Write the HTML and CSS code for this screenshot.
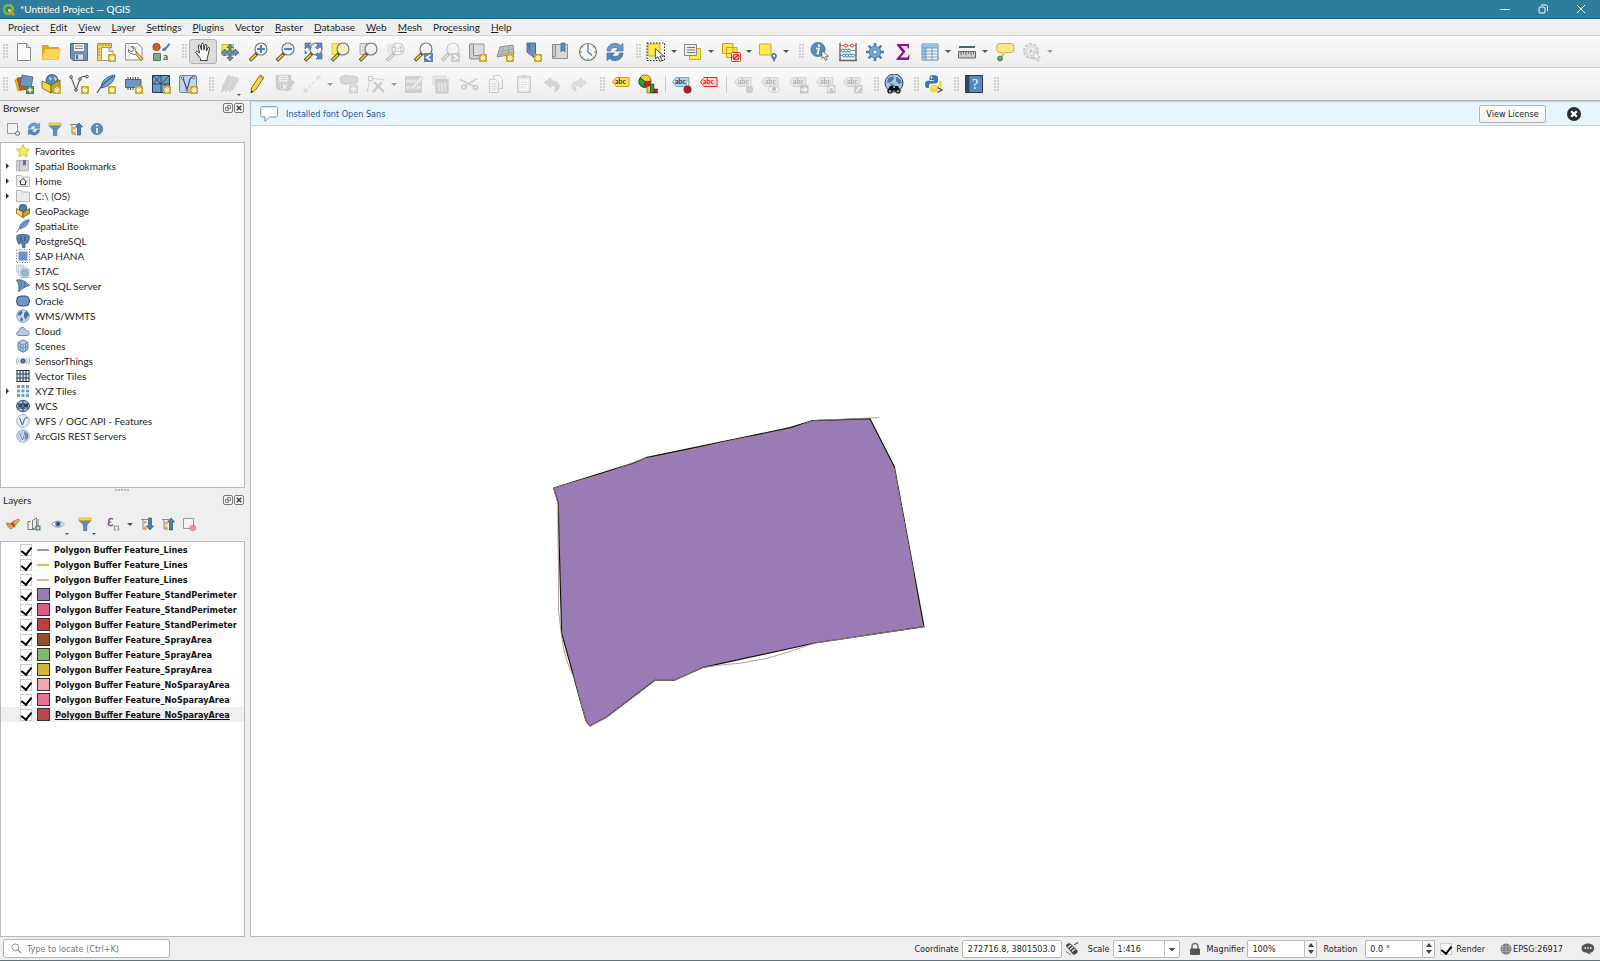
FILE: index.html
```html
<!DOCTYPE html>
<html lang="en">
  <head>
    <meta charset="UTF-8" />
    <meta name="viewport" content="width=device-width, initial-scale=1.0" />
    <title>*Untitled Project — QGIS</title>
    <link rel="stylesheet" href="styles.css">
  </head>
  <body>
    <!-- icon set -->
    <svg class="defs" width="0" height="0">
      <defs>
        <symbol id="badge" viewBox="0 0 8 8"><rect width="8" height="8" rx="1" fill="#cfa820"/><path d="M4 1v6M1 4h6M2 2l4 4M6 2L2 6" stroke="#fff" stroke-width="1"/></symbol>
        <symbol id="mag" viewBox="0 0 20 20"><path d="M9 11.500L2 18.500" stroke="#333" stroke-width="3.400"/><path d="M8 12.500L2.500 18" stroke="#f5c623" stroke-width="2"/><circle cx="13" cy="7" r="6" fill="#f2f2f0" fill-opacity=".85" stroke="#77797a" stroke-width="1.200"/></symbol>
        <symbol id="cursor" viewBox="0 0 10 12"><path d="M1 0.500v9l2.200-2 1.800 4 1.800-.8-1.800-3.800h3.200z" fill="#fff" stroke="#444" stroke-width=".8"/></symbol>
        <symbol id="tag" viewBox="0 0 18 10"><path d="M4 .5h13v9H4L.5 5z"/></symbol>

        <symbol id="new" viewBox="0 0 20 20"><path d="M3.500 1.500h9l4 4v13h-13z" fill="#fff" stroke="#8a8a8a"/><path d="M12.500 1.500v4h4" fill="#ddd" stroke="#8a8a8a"/></symbol>
        <symbol id="open" viewBox="0 0 20 20"><path d="M1 17V3h6l1.500 2H18v12z" fill="#dfa52a"/><path d="M1 17.500L4 7h15.500l-2.500 10.500z" fill="#fcd65c" stroke="#e8b234" stroke-width=".6"/></symbol>
        <symbol id="save" viewBox="0 0 20 20"><path d="M1.500 1.500h17v17H4l-2.500-2.500z" fill="#6a92bd" stroke="#4d6b89"/><path d="M5 2h10v7H5z" fill="#eceeef"/><path d="M6 4h8M6 6.500h8" stroke="#888"/><path d="M5.500 12h9v6h-9z" fill="#d9dde0" stroke="#4d6b89" stroke-width=".6"/><path d="M7 13h2v4H7z" fill="#4d6b89"/></symbol>
        <symbol id="layout" viewBox="0 0 20 20"><path d="M1.500 1.500h14v4h-10v13h-4z" fill="#f5d45c" stroke="#b79224"/><path d="M5.500 5.500h7.500l4 4v9H5.500z" fill="#fff" stroke="#999"/><path d="M13 5.500v4h4" fill="#ddd" stroke="#999"/><path d="M4 2v2M7 2v2M10 2v2M13 2v2M2 7h2M2 10h2M2 13h2" stroke="#8c6d12" stroke-width=".8"/><use href="#badge" x="12" y="12" width="8" height="8"/></symbol>
        <symbol id="manager" viewBox="0 0 20 20"><path d="M1.500 1.500h12l4.500 4v12.500H1.500z" fill="#fafafa" stroke="#8d8d8d"/><path d="M1.500 5h12M5 2v16" stroke="#ccc" stroke-width=".7"/><path d="M11 10l7.500 8" stroke="#8b6e25" stroke-width="3.200"/><path d="M12 11l6 6.500" stroke="#f4ce4a" stroke-width="1.800"/><path d="M7 4.500l2.500 2-.5 2.500-2.500.5-2-2c-.5 2.500 1 4.500 3.500 4.200l3 1 1.500-1.700-1-2.500C11.500 6.500 10 4 7 4.500z" fill="#fff" stroke="#555" stroke-width=".8"/></symbol>
        <symbol id="style" viewBox="0 0 20 20"><circle cx="5.500" cy="5" r="3.700" fill="#d15f28" stroke="#9b4117" stroke-width=".8"/><path d="M11.500 8.500c0-2 1.500-2.500 2.500-2.500l4-4.500 1 1-4 4.500c0 1.500-1.500 2-3.500 1.500z" fill="#5d87b5" stroke="#3a5c82" stroke-width=".6"/><path d="M2.500 11.500h7v7h-7z" fill="#7cab83" stroke="#50755a"/><text x="12" y="18" font-size="10" font-weight="bold" fill="#555">a</text></symbol>
        <symbol id="pan" viewBox="0 0 20 20"><path d="M7.500 18.500v-2L3 10.800c-.8-1.300.8-2.200 1.800-1.100L6.500 11 5.300 4.200c-.2-1.400 1.500-1.700 1.900-.4L8.500 8V2.300c0-1.400 1.900-1.400 2 0L11 8l.9-4.800c.3-1.300 2-1 1.900.3L13.500 9l1.300-3c.5-1.200 2-.7 1.700.6l-1.300 6c-.2 1.700-.9 2.600-1 4v2z" fill="#fff" stroke="#222" stroke-width=".9" stroke-linejoin="round"/></symbol>
        <symbol id="pansel" viewBox="0 0 20 20"><path d="M2 2.500h11.500v11H2z" fill="#fce94f" stroke="#b9a31c" stroke-width=".8"/><path d="M10 2l3 3.500h-2v3.500h4V7l4 3.500-4 3.500v-2h-4v3.500h2L10 19l-3-3.500h2V12H5v2l-4-3.500L5 7v2h4V5.500H7z" fill="#6590c2" stroke="#34567e" stroke-width=".7"/></symbol>
        <symbol id="zin" viewBox="0 0 20 20"><use href="#mag" width="20" height="20"/><path d="M13 3v8M9 7h8" stroke="#5182b8" stroke-width="2.200"/></symbol>
        <symbol id="zout" viewBox="0 0 20 20"><use href="#mag" width="20" height="20"/><path d="M9 7h8" stroke="#5182b8" stroke-width="2.200"/></symbol>
        <symbol id="zfull" viewBox="0 0 20 20"><use href="#mag" width="20" height="20"/><path d="M2 1h6L6 3l2.500 2.500-1.800 1.800L4 5 2 7zM19 1h-6l2 2-2.500 2.500 1.800 1.800L17 5l2 2zM19 17h-6l2-2-2.500-2.500 1.800-1.800L17 13l2-2zM2 8.500V12l2-1z" fill="#5f8cbf" stroke="#3d6290" stroke-width=".6"/></symbol>
        <symbol id="zsel" viewBox="0 0 20 20"><path d="M2 1.500h10v11H2z" fill="#fce94f" stroke="#d9bf1e" stroke-width=".7"/><use href="#mag" width="20" height="20"/><circle cx="13" cy="7" r="4.500" fill="#f5eebd"/></symbol>
        <symbol id="zlayer" viewBox="0 0 20 20"><path d="M2 1.500h10v11H2z" fill="#ddd" stroke="#999" stroke-width=".7"/><use href="#mag" width="20" height="20"/></symbol>
        <symbol id="znative" viewBox="0 0 20 20"><path d="M2 1.500h8v10H2z" fill="#ccc"/><use href="#mag" width="20" height="20"/><text x="8" y="10" font-size="7" font-weight="bold" fill="#444">1:1</text></symbol>
        <symbol id="zlast" viewBox="0 0 20 20"><use href="#mag" width="20" height="20"/><path d="M11 11h9v9h-9z" fill="#5785b8"/><path d="M17.500 13l-4 2.500 4 2.500" fill="none" stroke="#fff" stroke-width="1.500"/></symbol>
        <symbol id="znext" viewBox="0 0 20 20"><use href="#mag" width="20" height="20"/><path d="M11 11h9v9h-9z" fill="#888"/><path d="M13.500 13l4 2.500-4 2.500" fill="none" stroke="#fff" stroke-width="1.500"/></symbol>
        <symbol id="newmap" viewBox="0 0 20 20"><path d="M4 2h12v14H4z" fill="#ddd" stroke="#999"/><path d="M1.500 3c0-2 4-2 4 0v10.500h12.500v3.500H3c-1.500 0-1.500-1-1.500-2z" fill="#cfcfcf" stroke="#8a8a8a"/><use href="#badge" x="11" y="12" width="8" height="8"/></symbol>
        <symbol id="map3d" viewBox="0 0 20 20"><path d="M5 5l13-2 1 9-17 3z" fill="#c2c2c2" stroke="#8c8c8c"/><path d="M3 10l15-3M2 13l16-3M9 4l-3 10M14 4l-1 9" stroke="#999" stroke-width=".8"/><use href="#badge" x="11" y="12" width="8" height="8"/></symbol>
        <symbol id="newbm" viewBox="0 0 20 20"><path d="M4 1h8.500v16L8.500 13.500 4 10z" fill="#6691c2" stroke="#456a95"/><path d="M5 2h2v9z" fill="#4a6e98"/><use href="#badge" x="11" y="12" width="8" height="8"/></symbol>
        <symbol id="bms" viewBox="0 0 20 20"><path d="M2.500 2.500h3v13h-3z" fill="#ccc" stroke="#8c8c8c"/><path d="M5.500 2.500h12v14h-15v-2h3z" fill="#d9d9d9" stroke="#8c8c8c"/><path d="M11 1h4v9l-2-2-2 2z" fill="#5f8cbf" stroke="#3c618e" stroke-width=".7"/></symbol>
        <symbol id="clock" viewBox="0 0 20 20"><circle cx="10" cy="10" r="8.500" fill="#f6f6f6" stroke="#777" stroke-width="1.200"/><path d="M10 3v7l4 3.500" fill="none" stroke="#4876a8" stroke-width="1.200"/><path d="M10 2v2M10 16v2M2 10h2M16 10h2M4.500 4.500l1 1M15.500 4.500l-1 1M4.500 15.500l1-1M15.500 15.500l-1-1" stroke="#777" stroke-width=".8"/></symbol>
        <symbol id="refresh" viewBox="0 0 20 20"><path d="M2 9c0-7 9-10 13.500-5.500L18 1.500v7.500h-7.500l2.500-2.500C10 4.500 5.500 5.500 5.500 9z" fill="#6c9ac9" stroke="#4470a4" stroke-width=".7"/><path d="M18 11c0 7-9 10-13.500 5.500L2 18.500V11h7.500L7 13.500c3 2 7.500 1 7.500-2.500z" fill="#5283bb" stroke="#4470a4" stroke-width=".7"/></symbol>
        <symbol id="select" viewBox="0 0 20 20"><path d="M2 2h12v12H2z" fill="#fce94f" stroke="#c9ae17"/><path d="M1 1h17.500v17.500H1z" fill="none" stroke="#222" stroke-width="1" stroke-dasharray="1.500 1.500"/><use href="#cursor" x="8" y="6" width="12" height="14"/></symbol>
        <symbol id="selval" viewBox="0 0 20 20"><path d="M6.500 6.500h11v11h-11z" fill="#fce94f" stroke="#c9ae17"/><path d="M1.500 2.500h12v11h-12z" fill="#eee" stroke="#888"/><path d="M4 5.500h8M4 8h8M4 10.500h8" stroke="#777"/></symbol>
        <symbol id="desel" viewBox="0 0 20 20"><path d="M1.500 1.500h10.500v10h-10.500zM5.500 5.500h10.500v10h-10.500z" fill="#fce94f" stroke="#c9a417"/><rect x="10.500" y="10.500" width="9" height="9" rx="1" fill="#fff" stroke="#dd3b3b"/><circle cx="15" cy="15" r="3" fill="#f6c8c8" stroke="#d22" stroke-width="1.200"/><path d="M13 17l4-4" stroke="#d22" stroke-width="1.200"/></symbol>
        <symbol id="selloc" viewBox="0 0 20 20"><path d="M1.500 2h11.500v11h-11.500z" fill="#fce94f" stroke="#c9ae17"/><path d="M16 19.500c-1-2.500-2.500-4-2.500-5.700a2.500 2.500 0 015 0c0 1.700-1.500 3.200-2.500 5.700z" fill="#5f86ae" stroke="#42607f" stroke-width=".6"/><circle cx="16" cy="13.800" r="1" fill="#fff"/></symbol>
        <symbol id="identify" viewBox="0 0 20 20"><circle cx="8" cy="7.500" r="7.200" fill="#5d88ba" stroke="#41699a" stroke-width=".6"/><circle cx="9" cy="3.800" r="1.200" fill="#fff"/><path d="M6 6.500h3l-1.500 5h1.500" fill="none" stroke="#fff" stroke-width="1.600"/><use href="#cursor" x="11" y="8" width="9" height="11"/></symbol>
        <symbol id="abacus" viewBox="0 0 20 20"><path d="M2 1v17M18 1v17M1 18.500h18" stroke="#666" stroke-width="1.400"/><path d="M2 3.500h16M2 8.500h16M2 13.500h16" stroke="#777" stroke-width=".8"/><g fill="#fff" stroke-width="1"><g stroke="#d33"><circle cx="8" cy="3.500" r="1.500"/><circle cx="14" cy="3.500" r="1.500"/></g><g stroke="#3b9b45"><circle cx="5" cy="8.500" r="1.500"/><circle cx="8" cy="8.500" r="1.500"/><circle cx="11" cy="8.500" r="1.500"/></g><g stroke="#4a7fb5"><circle cx="6" cy="13.500" r="1.500"/><circle cx="9" cy="13.500" r="1.500"/><circle cx="12" cy="13.500" r="1.500"/><circle cx="15" cy="13.500" r="1.500"/></g></g></symbol>
        <symbol id="gear" viewBox="0 0 20 20"><path d="M10 1v18M1 10h18M3.600 3.600l12.800 12.800M16.400 3.600L3.600 16.400" stroke="#4d7fb8" stroke-width="2.600"/><circle cx="10" cy="10" r="5.800" fill="#79a6d6" stroke="#4d7fb8"/><circle cx="10" cy="10" r="2.200" fill="#f4f4f4" stroke="#4d7fb8"/></symbol>
        <symbol id="sigma" viewBox="0 0 20 20"><path d="M4 2h12v4.500h-1c-.5-2-1-2.500-3-2.500H8l4.500 5.500L7.500 15.500H12c2.500 0 3-.8 3.600-2.800h1L16 18H3.500v-1.200l5.800-6.800L4 3.300z" fill="#990f99"/></symbol>
        <symbol id="table" viewBox="0 0 20 20"><path d="M2 2h16v16H2z" fill="#f5f8fb" stroke="#5b86b8"/><path d="M2 2h16v4H2zM2 6h4v12H2z" fill="#9dbfe0"/><path d="M2 6h16M2 9h16M2 12h16M2 15h16M6 6v12M12 6v12" stroke="#6b95c4" stroke-width=".9"/></symbol>
        <symbol id="ruler" viewBox="0 0 20 20"><path d="M2 5h16" stroke="#243e6a" stroke-width="1.600"/><path d="M1.500 9.500h17v6.500h-17z" fill="#c9c9c9" stroke="#666"/><path d="M4 10v3M6.500 10v2M9 10v3M11.500 10v2M14 10v3M16.500 10v2" stroke="#555" stroke-width=".8"/></symbol>
        <symbol id="tip" viewBox="0 0 20 20"><path d="M4 1.500h12.500c3 0 3 9 0 9H10L7 15v-4.500H4c-3 0-3-9 0-9z" fill="#f9e88a" stroke="#cdb33a"/><circle cx="5" cy="16.500" r="2.500" fill="#66a06f" stroke="#44754c" stroke-width=".8"/></symbol>
        <symbol id="action" viewBox="0 0 20 20"><circle cx="9" cy="9" r="7" fill="#ddd" stroke="#777" stroke-width="2" stroke-dasharray="3 1.400"/><circle cx="9" cy="9" r="4.500" fill="#eee" stroke="#888"/><path d="M7.500 6.500v5l4-2.500z" fill="#777"/><use href="#cursor" x="11" y="9" width="9" height="11"/></symbol>

        <symbol id="dsm" viewBox="0 0 20 20"><path d="M1 6l9-2 3 11-9 2z" fill="#e8b92d" stroke="#a87b18" stroke-width=".6"/><path d="M3 4l9-1 2 12-8 1z" fill="#ca5226" stroke="#8f3312" stroke-width=".6"/><path d="M8 1l11 2-2 10.500-11-2z" fill="#6b96c5" stroke="#3e618a" stroke-width=".8"/><path d="M12 12h8v8h-8z" fill="#4a8a55"/><path d="M16 13.500v5M13.500 16h5" stroke="#fff" stroke-width="1.600"/></symbol>
        <symbol id="gpkgnew" viewBox="0 0 20 20"><circle cx="11" cy="6.500" r="6" fill="#5b86b8" stroke="#2d4766" stroke-width=".8"/><path d="M8 3l3 1-2 3zM13 2l3 3-2 2z" fill="#cfe0f0"/><path d="M1 7l9 4v8l-9-5z" fill="#f6d743" stroke="#6b5a12" stroke-width=".8"/><path d="M19 6l-9 5v8l9-5z" fill="#c9a51c" stroke="#6b5a12" stroke-width=".8"/><use href="#badge" x="12" y="12" width="8" height="8"/></symbol>
        <symbol id="shpnew" viewBox="0 0 20 20"><path d="M2 3l5 13 4-11c1-3 4-3 7-2" fill="none" stroke="#4c5b69" stroke-width="1.100"/><g fill="#fff" stroke="#444"><circle cx="2" cy="3" r="1.300"/><circle cx="7" cy="16" r="1.300"/><circle cx="11" cy="5" r="1.300"/><circle cx="18" cy="2.500" r="1.300"/></g><use href="#badge" x="12" y="12" width="8" height="8"/></symbol>
        <symbol id="feather" viewBox="0 0 20 20"><path d="M5 13C6 6 11 2 19 1c-1 6-4 11-14 13z" fill="#7ba3cf" stroke="#38587c" stroke-width=".9"/><path d="M1 19C5 12 11 6 17 2.500" fill="none" stroke="#38587c" stroke-width="1.100"/></symbol>
        <symbol id="splnew" viewBox="0 0 20 20"><use href="#feather" width="20" height="20"/><use href="#badge" x="12" y="12" width="8" height="8"/></symbol>
        <symbol id="memnew" viewBox="0 0 20 20"><path d="M5 3v13M7.500 3v13M10 3v13M12.500 3v13M15 3v13" stroke="#35506f" stroke-width="1"/><path d="M2.500 5.500h15.500v8h-15.500z" fill="#6c98c8" stroke="#416690"/><use href="#badge" x="12" y="12" width="8" height="8"/></symbol>
        <symbol id="meshnew" viewBox="0 0 20 20"><path d="M1.500 1.500h17v17h-17z" fill="#6c98c8" stroke="#26384d"/><path d="M1.500 10h17M10 1.500v17M1.500 1.500l8.500 8.500M10 1.500l-8.500 8.500M10 10l8.500-8.500M14 10v8" stroke="#26384d" stroke-width=".8"/><use href="#badge" x="12" y="12" width="8" height="8"/></symbol>
        <symbol id="virtnew" viewBox="0 0 20 20"><rect x="1.500" y="1.500" width="17" height="17" rx="1.500" fill="#c0d4ea" stroke="#6089b8"/><path d="M5 4l4 12 3-11c1-2 2-2 4-2" fill="none" stroke="#36485c" stroke-width="1.100"/><g fill="#fff" stroke="#444" stroke-width=".8"><circle cx="4.500" cy="4" r="1.200"/><circle cx="9" cy="16" r="1.200"/><circle cx="15.500" cy="3.500" r="1.200"/></g><use href="#badge" x="12" y="12" width="8" height="8"/></symbol>
        <symbol id="pencils" viewBox="0 0 20 20"><path d="M1.500 18l1-5L8 1l3.500 2-6 12z" fill="#a09a92" stroke="#777" stroke-width=".6"/><path d="M5.500 18l1-5L12 2l3 1.500-6 12z" fill="#b0aaa2" stroke="#777" stroke-width=".6"/><path d="M9.500 18l1-5L16 3l3 2-6 10.500z" fill="#a09a92" stroke="#777" stroke-width=".6"/></symbol>
        <symbol id="pencil" viewBox="0 0 20 20"><path d="M4.500 14L13 1l4 2.500L8.500 16l-4.500 3z" fill="#f6d743" stroke="#7b6416" stroke-width=".9"/><path d="M13 1l4 2.500-1 1.700-4-2.500z" fill="#b9975a"/><path d="M4.300 16.500L4 19l2.200-1.200z" fill="#222"/></symbol>
        <symbol id="saveed" viewBox="0 0 20 20"><use href="#save" width="17" height="17"/><path d="M10 18l1-4 6-8 3 2-6 8z" fill="#9c8b70"/></symbol>
        <symbol id="line" viewBox="0 0 20 20"><path d="M3 17L17 3" stroke="#888" stroke-dasharray="3 2"/><path d="M1.500 14.500h4v4h-4zM14.500 1.500h4v4h-4z" fill="#bbb"/></symbol>
        <symbol id="blob" viewBox="0 0 20 20"><path d="M1 5c0-4 6-4 9-3 4 .5 9-1 9 3.500 0 4.500-4 4.500-7 4C9 9 8 11 5 10 2 9.500 1 8 1 5z" fill="#a8a49b" stroke="#777"/><path d="M10.500 11h8v8h-8z" fill="#aaa" stroke="#777" stroke-width=".6"/><path d="M14.500 12v6M11.500 15h6" stroke="#fff" stroke-width="1.300"/></symbol>
        <symbol id="vertex" viewBox="0 0 20 20"><path d="M4 5l-3 13M5 4l13 2" stroke="#888"/><path d="M2.500 2.500h4v4h-4z" fill="#eee" stroke="#777"/><path d="M7 18l9-10M8 8l10 10" stroke="#888" stroke-width="2.400"/></symbol>
        <symbol id="multi" viewBox="0 0 20 20"><path d="M1.500 2.500h16v16h-16z" fill="#ccc8be" stroke="#888"/><path d="M1.500 2.500h16v3h-16zM1.500 9h16v3h-16zM1.500 15.500h16v3h-16z" fill="#8e8a80"/><path d="M6 17l2-5 9-10 2.500 2-9 10z" fill="#e0dccf" stroke="#777" stroke-width=".7"/></symbol>
        <symbol id="trash" viewBox="0 0 20 20"><path d="M2 2h13v9H2z" fill="#ccc8c0" stroke="#aaa"/><path d="M5 7h12v12H5z" fill="#a39a8f" stroke="#777"/><path d="M4 6h14" stroke="#777" stroke-width="1.600"/><path d="M8 9v8M11 9v8M14 9v8" stroke="#eee"/></symbol>
        <symbol id="cut" viewBox="0 0 20 20"><path d="M1 5.500l14 7M18 4.500L6 12" stroke="#888" stroke-width="1.800"/><g fill="none" stroke="#777" stroke-width="1.500"><circle cx="16.500" cy="13.500" r="2"/><circle cx="5" cy="13" r="2"/></g></symbol>
        <symbol id="copy" viewBox="0 0 20 20"><path d="M7.500 1.500h6l3 3v10h-9z" fill="#eee" stroke="#888"/><path d="M3.500 5.500h6l3 3v10h-9z" fill="#f4f4f4" stroke="#888"/><path d="M5.500 10h5M5.500 12.500h5M5.500 15h5" stroke="#aaa"/></symbol>
        <symbol id="paste" viewBox="0 0 20 20"><path d="M3.500 2.500h13v16h-13z" fill="#ccc" stroke="#888"/><path d="M5.500 5h9v11.500h-9z" fill="#fff"/><path d="M7 1h6v3H7z" fill="#999"/><path d="M7 8h6M7 10.500h6M7 13h4" stroke="#aaa"/></symbol>
        <symbol id="undo" viewBox="0 0 20 20"><path d="M2.500 8.500L9 3.500v3.200c6 0 9 3 8 6.800-.5 2-2 3.500-4.500 4 2-3.500 1.500-6.500-3.500-6.300V14z" fill="#999" stroke="#777" stroke-width=".6"/></symbol>
        <symbol id="redo" viewBox="0 0 20 20"><path d="M17.500 8.500L11 3.500v3.200c-6 0-9 3-8 6.800.5 2 2 3.500 4.500 4-2-3.500-1.500-6.500 3.500-6.300V14z" fill="#bbb" stroke="#777" stroke-width=".6"/></symbol>
        <symbol id="label" viewBox="0 0 20 20"><use href="#tag" x="1" y="3" width="18" height="10" fill="#fbe34d" stroke="#c5a51c"/><text x="4" y="10" font-size="7" font-weight="bold" fill="#333">abc</text></symbol>
        <symbol id="diagram" viewBox="0 0 20 20"><circle cx="7" cy="7.500" r="6" fill="#d11f1f" stroke="#222" stroke-width=".6"/><path d="M7 7.500L2 3.500A6 6 0 0113 7z" fill="#f4d02c" stroke="#222" stroke-width=".5"/><path d="M7 7.500L2 3.800A6 6 0 006 13.400z" fill="#2d9a3a" stroke="#222" stroke-width=".5"/><path d="M9 12h3.500v7H9z" fill="#f4d02c" stroke="#222" stroke-width=".5"/><path d="M12.500 10h3.500v9h-3.500z" fill="#2d9a3a" stroke="#222" stroke-width=".5"/><path d="M16 15h3.500v4H16z" fill="#d11f1f" stroke="#222" stroke-width=".5"/></symbol>
        <symbol id="pin" viewBox="0 0 20 20"><use href="#tag" x="0" y="3" width="18" height="10" fill="#b9d4f2" stroke="#7da6d6"/><text x="3" y="10" font-size="7" font-weight="bold" fill="#333">abc</text><path d="M14.500 7h2v7h-2z" fill="#fff" stroke="#888" stroke-width=".5"/><circle cx="15.500" cy="15.500" r="3.700" fill="#a5242a" stroke="#781015" stroke-width=".6"/></symbol>
        <symbol id="unplaced" viewBox="0 0 20 20"><use href="#tag" x="0" y="3" width="18" height="10" fill="#ffd6d6" stroke="#e22"/><text x="3" y="10" font-size="7" font-weight="bold" fill="#d11">abc</text></symbol>
        <symbol id="lgrey" viewBox="0 0 20 20"><use href="#tag" x="0" y="3" width="18" height="10" fill="#cfcbbf" stroke="#999"/><text x="4" y="10" font-size="7" font-weight="bold" fill="#222">abc</text></symbol>
        <symbol id="lpin" viewBox="0 0 20 20"><use href="#lgrey" width="20" height="20"/><path d="M14.500 7h2v7h-2z" fill="#fff" stroke="#888" stroke-width=".5"/><circle cx="15.500" cy="15.500" r="3.700" fill="#888"/></symbol>
        <symbol id="leye" viewBox="0 0 20 20"><use href="#lgrey" width="20" height="20"/><path d="M7 15.500c3-5 9-5 12 0-3 4-9 4-12 0z" fill="#fff" stroke="#777"/><circle cx="13" cy="15" r="2.200" fill="#666"/></symbol>
        <symbol id="lmove" viewBox="0 0 20 20"><use href="#lgrey" width="20" height="20"/><path d="M11 11h8.500v8.500H11z" fill="#777"/><path d="M12 14.500h3v-2l4 3-4 3v-2h-3z" fill="#fff"/></symbol>
        <symbol id="lrot" viewBox="0 0 20 20"><use href="#lgrey" width="20" height="20"/><path d="M11 11h8.500v8.500H11z" fill="#888"/><path d="M13.500 17.500a2.600 2.600 0 114-1" fill="none" stroke="#fff" stroke-width="1.400"/></symbol>
        <symbol id="ledit" viewBox="0 0 20 20"><use href="#lgrey" width="20" height="20"/><path d="M11 11h8.500v8.500H11z" fill="#888"/><path d="M13 17.500l4.500-5" stroke="#fff" stroke-width="1.800"/></symbol>
        <symbol id="metasearch" viewBox="0 0 20 20"><circle cx="10" cy="9" r="9" fill="#a9c4df" stroke="#333f4c"/><path d="M4 4l5-2 1 3-3 3-4 1zM12 3l4 2 2 4-3 1-3-3zM6 9l5 2-1 3-3-1z" fill="#55799f"/><path d="M3.500 17a2.700 2.700 0 010-.5L6 12h3v2h2v-2h3l2.500 4.500z" fill="#111"/><circle cx="6" cy="17" r="2.600" fill="#111"/><circle cx="14" cy="17" r="2.600" fill="#111"/><circle cx="6" cy="17.300" r="1.200" fill="#aab"/><circle cx="14" cy="17.300" r="1.200" fill="#aab"/></symbol>
        <symbol id="python" viewBox="0 0 20 20"><path d="M9.500 1c-3 0-4 1-4 2.500V6h4.500v.8H3.500C2 6.800 1 8 1 10.500S2 14 3.500 14H5v-2.200C5 10.300 6 9.500 7.500 9.500h4c1.500 0 2.500-1 2.500-2.500V3.500C14 2 12.500 1 9.500 1z" fill="#3d77a8"/><path d="M15 6.500V9c0 1.500-1 2.300-2.500 2.300h-4C7 11.300 6 12.200 6 13.700V16c0 1.500 1.500 2.500 4 2.500s4-1 4-2.500v-1.800H9.800v-.8h6.200c1.500 0 2.200-1.200 2.200-3.400s-.8-3.500-2.200-3.500z" fill="#fbd548"/><circle cx="7.500" cy="3.500" r=".9" fill="#fff"/><path d="M13.500 13.500l4.500 2.500-4.500 2.500" fill="none" stroke="#444" stroke-width="1.300"/></symbol>
        <symbol id="help" viewBox="0 0 20 20"><path d="M1.500 1.500h17v17h-17z" fill="#5d88bb" stroke="#26374a"/><path d="M1.500 1.500h4v17h-4z" fill="#33475e"/><text x="8" y="15" font-size="14" fill="#fff" font-family="Liberation Serif, serif">?</text></symbol>

        <!-- browser tree, 14px -->
        <symbol id="t-star" viewBox="0 0 14 14"><path d="M7 .6l1.900 4.300 4.700.4-3.600 3 1.100 4.700L7 10.600 2.900 13 4 8.300.4 5.300l4.700-.4z" fill="#fff04f" stroke="#cfae1b" stroke-width=".8"/></symbol>
        <symbol id="t-bm" viewBox="0 0 14 14"><path d="M.5 1.500h12v10.500H.5z" fill="#d5d5d5" stroke="#aaa" stroke-width=".8"/><path d="M3.500 1.500V12" stroke="#999" stroke-width=".8"/><path d="M7 1h3v6L8.500 5.500 7 7z" fill="#54789e"/></symbol>
        <symbol id="t-home" viewBox="0 0 14 14"><path d="M.5 12.500V1.500h5l1 1.500h7v9.500z" fill="#f0f0f0" stroke="#aaa" stroke-width=".8"/><path d="M7 4.500l3.500 3.200h-1v3h-5v-3h-1z" fill="#fff" stroke="#333" stroke-width="1"/></symbol>
        <symbol id="t-dir" viewBox="0 0 14 14"><path d="M.5 12.500V1.500h5l1 1.500h7v9.500z" fill="#ececec" stroke="#aaa" stroke-width=".8"/></symbol>
        <symbol id="t-gpkg" viewBox="0 0 14 14"><circle cx="7" cy="4" r="3.800" fill="#547ba5" stroke="#2b435e" stroke-width=".7"/><path d="M.5 4.500L7 8v5.500l-6.500-4z" fill="#f8dc48" stroke="#5d501b" stroke-width=".7"/><path d="M13.500 4.500L7 8v5.500l6.500-4z" fill="#c7a41e" stroke="#5d501b" stroke-width=".7"/></symbol>
        <symbol id="t-pg" viewBox="0 0 14 14"><path d="M1 1.500c3-1.500 9-1.500 12 0 1 3-.5 6-1.500 7.500l-2.500.3v4.200H6.500L6 9H4.500L3 10.500C1.500 8 0 4 1 1.500z" fill="#5f84ad" stroke="#36587d" stroke-width=".8"/><path d="M5 2v5l-1 2M9 2v5" fill="none" stroke="#2e4d6e" stroke-width=".8"/></symbol>
        <symbol id="t-hana" viewBox="0 0 14 14"><path d="M2.500 2.500h9v9h-9z" fill="#6a95c5"/><path d="M.5.5h13v13H.5z" fill="none" stroke="#5c7fa8" stroke-dasharray="1 1.500"/></symbol>
        <symbol id="t-stac" viewBox="0 0 14 14"><path d="M.5 1h7v7h-7zM2.500 3h8v8h-8z" fill="#edf2f7" stroke="#b4c3d4" stroke-width=".8"/><path d="M5 5h8v8.500H5z" fill="#cddceb" stroke="#91a9c3" stroke-width=".8"/><circle cx="9" cy="9" r="3" fill="#9eb9d5" stroke="#6b8cb0" stroke-width=".7"/></symbol>
        <symbol id="t-ms" viewBox="0 0 14 14"><path d="M.5 1C5 0 10 2 13.500 6.500 10 7 7 9 2.500 13 3.500 9 3 5 .5 1z" fill="#6d95c0" stroke="#41648c" stroke-width=".8"/><path d="M4.500 1.500c1 3 1 5 0 9M8 2.500c1 2 1 4 .3 6" fill="none" stroke="#41648c" stroke-width=".7"/></symbol>
        <symbol id="t-ora" viewBox="0 0 14 14"><rect x=".7" y="2" width="12.600" height="10" rx="4" fill="#6d96c6" stroke="#314f71" stroke-width="1"/></symbol>
        <symbol id="t-globe" viewBox="0 0 14 14"><circle cx="7" cy="7" r="6.300" fill="#c9dbee" stroke="#6788ad" stroke-width=".8"/><path d="M2.500 3.500l3-2 1 2-2 3H2zM8 4l3-2 2 4-2 2-1 3-2-3zM5 8l2 2-1 3-2-2z" fill="#48709c"/></symbol>
        <symbol id="t-cloud" viewBox="0 0 14 14"><path d="M3 11.500c-3.500 0-3-4 0-4C3.500 2.500 9 2 9.500 6.500c4-.5 5 5 1.500 5z" fill="#b3cbe4" stroke="#5b7fa6" stroke-width=".9"/></symbol>
        <symbol id="t-scene" viewBox="0 0 14 14"><path d="M7 .8l5 2.700v7L7 13.300 2 10.500v-7z" fill="#b6cbe2" stroke="#54789f" stroke-width=".9"/><path d="M2 3.500L7 6l5-2.500M7 6v7M4.500 5v7M9.500 5v7M2 7l5 2.500L12 7" fill="none" stroke="#54789f" stroke-width=".7"/></symbol>
        <symbol id="t-sens" viewBox="0 0 14 14"><circle cx="7" cy="7" r="2.200" fill="#5c86b3" stroke="#223" stroke-width=".8"/><path d="M3.700 4.500c-1.200 1.500-1.200 3.500 0 5M10.300 4.500c1.200 1.500 1.200 3.500 0 5M1.700 3.500c-1.500 2.200-1.500 4.800 0 7M12.300 3.500c1.500 2.200 1.500 4.800 0 7" fill="none" stroke="#8795a5" stroke-width=".9"/></symbol>
        <symbol id="t-grid" viewBox="0 0 14 14"><path d="M1 1.500h12v11H1z" fill="#e8f0f8"/><path d="M1 1.500h12v11H1zM1 5h12M1 9h12M4 1.500v11M7 1.500v11M10 1.500v11" fill="none" stroke="#26384f" stroke-width="1.100"/></symbol>
        <symbol id="t-xyz" viewBox="0 0 14 14"><path d="M1 1h3v3H1zM5.500 1h3v3h-3zM10 1h3v3h-3zM1 5.500h3v3H1zM5.500 5.500h3v3h-3zM10 5.500h3v3h-3zM1 10h3v3H1zM5.500 10h3v3h-3zM10 10h3v3h-3z" fill="#6f9bcd"/></symbol>
        <symbol id="t-wcs" viewBox="0 0 14 14"><ellipse cx="7" cy="7" rx="6.500" ry="5.700" fill="#9dbbdc" stroke="#2d4560" stroke-width=".9"/><path d="M1 5h12M1 9h12M7 1.500v11" stroke="#2d4560" stroke-width="1.100"/><path d="M3 5h3v3H2zM8 5h4v3H8z" fill="#2d4560"/></symbol>
        <symbol id="t-wfs" viewBox="0 0 14 14"><circle cx="7" cy="7" r="6.300" fill="#e3edf6" stroke="#8aa7c6" stroke-width=".9"/><path d="M3.500 4l3 7 2-6c.5-1 1.500-1.500 3-1" fill="none" stroke="#3c587a" stroke-width="1"/></symbol>
        <symbol id="t-arc" viewBox="0 0 14 14"><circle cx="7" cy="7" r="6.300" fill="#b9cfe6" stroke="#9db8d5" stroke-width=".9"/><path d="M8 2l4 3v4l-3 2z" fill="#5f8cbd"/><path d="M3.500 4l3 7 2-5.500" fill="none" stroke="#fff" stroke-width="1.800"/><path d="M3.500 4l3 7 2-5.500" fill="none" stroke="#3c587a" stroke-width=".8"/></symbol>

        <!-- dock tool icons, 14px -->
        <symbol id="d-add" viewBox="0 0 14 14"><path d="M1.500 1.500h10v10h-10z" fill="#f4f4f4" stroke="#999"/><circle cx="11.500" cy="11.500" r="2" fill="#fff" stroke="#3f8d4c"/></symbol>
        <symbol id="d-filter" viewBox="0 0 14 14"><path d="M1 3.500h12L8.800 8v5.500H5.500V8z" fill="#5f8dbd" stroke="#3f6792" stroke-width=".6"/><path d="M1 1h12v2.500H1z" fill="#f5de3f" stroke="#bda21f" stroke-width=".6"/></symbol>
        <symbol id="d-collapse" viewBox="0 0 14 14"><path d="M1 2.500h7M3 2.500V12h4" fill="none" stroke="#888"/><path d="M3.500 5h3v2.500h-3zM3.500 9.500h3V12h-3z" fill="#f3a332"/><path d="M10 1l3.500 4h-2v8h-3V5h-2z" fill="#4f7fb3" stroke="#2c5079" stroke-width=".7"/></symbol>
        <symbol id="d-expand" viewBox="0 0 14 14"><path d="M1 2.500h7M3 2.500V12h4" fill="none" stroke="#888"/><path d="M3.500 4h3v2.500h-3zM3.500 9.500h3V12h-3z" fill="#f3a332"/><path d="M10 13l3.500-4h-2V1h-3v8h-2z" fill="#4f7fb3" stroke="#2c5079" stroke-width=".7"/></symbol>
        <symbol id="d-info" viewBox="0 0 14 14"><circle cx="7" cy="7" r="5.800" fill="#5d8bbf" stroke="#4473a6" stroke-width=".6"/><path d="M7 3v1.500M7 6v5" stroke="#fff" stroke-width="1.600"/></symbol>
        <symbol id="d-style" viewBox="0 0 14 14"><path d="M.5 6l4 .5L8 4l2 3-3 3.500-2 1.500C3 11 1 9 .5 6z" fill="#e9a53a" stroke="#a7631c" stroke-width=".7"/><path d="M7 4.500L12.500 2l1 1.500-4 4.500z" fill="#e8b948" stroke="#906d20" stroke-width=".7"/><path d="M6 5l3.500 4-1.500 1.500L4.500 7z" fill="#cf4135"/></symbol>
        <symbol id="d-group" viewBox="0 0 14 14"><path d="M3.500 4.500h-2.500v8h6M6 3v9h4" fill="none" stroke="#777"/><path d="M5.500 3.500l4-2.500v9l-4 2z" fill="#eee" stroke="#666" stroke-width=".8"/><path d="M11 2v7" stroke="#777"/><path d="M8.500 8.500h5v5h-5z" fill="#4a8a55"/><path d="M11 9.500v3M9.500 11h3" stroke="#fff"/></symbol>
        <symbol id="d-eye" viewBox="0 0 14 14"><path d="M.5 7.500C3.500 3 10 3 13.500 7.500 10 11 4 11 .5 7.500z" fill="#e7edf4" stroke="#8e9aa8" stroke-width=".9"/><circle cx="7" cy="7" r="2.700" fill="#4a77a8"/><circle cx="7" cy="7" r="1.100" fill="#1d2f44"/></symbol>
        <symbol id="d-eps" viewBox="0 0 14 14"><path d="M7 2C3 .5 1 4 4.500 5 .5 5.500 2 10 7 8" fill="none" stroke="#825b87" stroke-width="1.500"/><path d="M7.500 9h5.500M8.500 9v4h1.500M12.500 9v4H11" stroke="#999" fill="none" stroke-width="1.200"/></symbol>
        <symbol id="d-remove" viewBox="0 0 14 14"><path d="M1.500 1.500h10v10h-10z" fill="#f4f4f4" stroke="#999"/><rect x="8" y="9" width="5.500" height="4" rx="1.500" fill="#fff" stroke="#e33"/><path d="M9 11h3.500" stroke="#e33" stroke-width="1.200"/></symbol>
        <symbol id="d-float" viewBox="0 0 10 10"><rect x=".5" y=".5" width="9" height="9" rx="1.500" fill="#f4f4f4" stroke="#777"/><path d="M4.500 2.500h3v3h-3zM2.500 4.500h3v3h-3z" fill="none" stroke="#777" stroke-width=".9"/></symbol>
        <symbol id="d-close" viewBox="0 0 10 10"><rect x=".5" y=".5" width="9" height="9" rx="1.500" fill="#f4f4f4" stroke="#777"/><path d="M2.800 2.800l4.400 4.400M7.200 2.800L2.800 7.200" stroke="#444" stroke-width="1.600"/></symbol>
      </defs>
    </svg>

    <header class="titlebar">
      <svg class="logo" viewBox="0 0 14 14"><path d="M7 2.200a4.800 4.800 0 103 8.500" fill="none" stroke="#7fb03a" stroke-width="2.800"/><path d="M7 2.200a4.800 4.800 0 014.600 6" fill="none" stroke="#8fb83a" stroke-width="2.800"/><path d="M7 7h3l3.500 4v2.500H11L7 9.500z" fill="#e58a2b"/><path d="M6.500 6.500h3v3h-3z" fill="#f3d33b"/></svg>
      <h1>*Untitled Project — QGIS</h1>
      <div class="winbtns">
        <button aria-label="Minimize"><svg viewBox="0 0 10 10"><path d="M.5 5.500h9" stroke="#fff"/></svg></button>
        <button aria-label="Restore"><svg viewBox="0 0 10 10"><rect x="1" y="3" width="6" height="6" rx="1" fill="none" stroke="#fff"/><path d="M3 1h5c1 0 1.500.5 1.500 1.500V7" fill="none" stroke="#fff"/></svg></button>
        <button aria-label="Close"><svg viewBox="0 0 10 10"><path d="M1 1l8 8M9 1L1 9" stroke="#fff"/></svg></button>
      </div>
    </header>

    <nav class="menubar">
      <a href="#">Pro<u>j</u>ect</a><a href="#"><u>E</u>dit</a><a href="#"><u>V</u>iew</a><a href="#"><u>L</u>ayer</a><a href="#"><u>S</u>ettings</a><a href="#"><u>P</u>lugins</a><a href="#">Vect<u>o</u>r</a><a href="#"><u>R</u>aster</a><a href="#"><u>D</u>atabase</a><a href="#"><u>W</u>eb</a><a href="#"><u>M</u>esh</a><a href="#">Pro<u>c</u>essing</a><a href="#"><u>H</u>elp</a>
    </nav>

    <div class="toolbar">
      <div class="group g-file">
        <button aria-label="New"><svg><use href="#new"/></svg></button>
        <button aria-label="Open"><svg><use href="#open"/></svg></button>
        <button aria-label="Save"><svg><use href="#save"/></svg></button>
        <button aria-label="New layout"><svg><use href="#layout"/></svg></button>
        <button aria-label="Layout manager"><svg><use href="#manager"/></svg></button>
        <button aria-label="Style manager"><svg><use href="#style"/></svg></button>
      </div>
      <div class="group g-nav">
        <button class="on" aria-label="Pan"><svg><use href="#pan"/></svg></button>
        <button aria-label="Pan to selection"><svg><use href="#pansel"/></svg></button>
        <button aria-label="Zoom in"><svg><use href="#zin"/></svg></button>
        <button aria-label="Zoom out"><svg><use href="#zout"/></svg></button>
        <button aria-label="Zoom full"><svg><use href="#zfull"/></svg></button>
        <button aria-label="Zoom to selection"><svg><use href="#zsel"/></svg></button>
        <button aria-label="Zoom to layer"><svg><use href="#zlayer"/></svg></button>
        <button disabled aria-label="Native resolution"><svg><use href="#znative"/></svg></button>
        <button aria-label="Zoom last"><svg><use href="#zlast"/></svg></button>
        <button disabled aria-label="Zoom next"><svg><use href="#znext"/></svg></button>
        <button aria-label="New map view"><svg><use href="#newmap"/></svg></button>
        <button aria-label="New 3D view"><svg><use href="#map3d"/></svg></button>
        <button aria-label="New bookmark"><svg><use href="#newbm"/></svg></button>
        <button aria-label="Bookmarks"><svg><use href="#bms"/></svg></button>
        <button aria-label="Temporal controller"><svg><use href="#clock"/></svg></button>
        <button aria-label="Refresh"><svg><use href="#refresh"/></svg></button>
      </div>
      <div class="group g-select">
        <button class="drop" aria-label="Select"><svg><use href="#select"/></svg></button>
        <button class="drop" aria-label="Select by value"><svg><use href="#selval"/></svg></button>
        <button class="drop" aria-label="Deselect"><svg><use href="#desel"/></svg></button>
        <button class="drop" aria-label="Select by location"><svg><use href="#selloc"/></svg></button>
      </div>
      <div class="group g-attr">
        <button aria-label="Identify"><svg><use href="#identify"/></svg></button>
        <button aria-label="Field calculator"><svg><use href="#abacus"/></svg></button>
        <button aria-label="Toolbox"><svg><use href="#gear"/></svg></button>
        <button aria-label="Statistics"><svg><use href="#sigma"/></svg></button>
        <button class="drop" aria-label="Attribute table"><svg><use href="#table"/></svg></button>
        <button class="drop" aria-label="Measure"><svg><use href="#ruler"/></svg></button>
        <button aria-label="Map tips"><svg><use href="#tip"/></svg></button>
        <button class="drop" disabled aria-label="Run action"><svg><use href="#action"/></svg></button>
      </div>
    </div>

    <div class="toolbar second">
      <div class="group g-source">
        <button aria-label="Data source manager"><svg><use href="#dsm"/></svg></button>
        <button aria-label="New GeoPackage"><svg><use href="#gpkgnew"/></svg></button>
        <button aria-label="New Shapefile"><svg><use href="#shpnew"/></svg></button>
        <button aria-label="New SpatiaLite"><svg><use href="#splnew"/></svg></button>
        <button aria-label="New scratch layer"><svg><use href="#memnew"/></svg></button>
        <button aria-label="New mesh"><svg><use href="#meshnew"/></svg></button>
        <button aria-label="New virtual layer"><svg><use href="#virtnew"/></svg></button>
      </div>
      <div class="group g-edit">
        <button class="tick" disabled aria-label="Current edits"><svg><use href="#pencils"/></svg></button>
        <button aria-label="Toggle editing"><svg><use href="#pencil"/></svg></button>
        <button disabled aria-label="Save edits"><svg><use href="#saveed"/></svg></button>
        <button class="drop" disabled aria-label="Digitize"><svg><use href="#line"/></svg></button>
        <button disabled aria-label="Add polygon"><svg><use href="#blob"/></svg></button>
        <button class="drop" disabled aria-label="Vertex tool"><svg><use href="#vertex"/></svg></button>
        <button disabled aria-label="Modify attributes"><svg><use href="#multi"/></svg></button>
        <button disabled aria-label="Delete"><svg><use href="#trash"/></svg></button>
        <button disabled aria-label="Cut"><svg><use href="#cut"/></svg></button>
        <button disabled aria-label="Copy"><svg><use href="#copy"/></svg></button>
        <button disabled aria-label="Paste"><svg><use href="#paste"/></svg></button>
        <button disabled aria-label="Undo"><svg><use href="#undo"/></svg></button>
        <button disabled aria-label="Redo"><svg><use href="#redo"/></svg></button>
      </div>
      <div class="group g-label">
        <button aria-label="Labeling"><svg><use href="#label"/></svg></button>
        <button aria-label="Diagrams"><svg><use href="#diagram"/></svg></button>
        <span class="sep"></span>
        <button aria-label="Highlight pinned"><svg><use href="#pin"/></svg></button>
        <button aria-label="Unplaced labels"><svg><use href="#unplaced"/></svg></button>
        <span class="sep"></span>
        <button disabled aria-label="Pin labels"><svg><use href="#lpin"/></svg></button>
        <button disabled aria-label="Show labels"><svg><use href="#leye"/></svg></button>
        <button disabled aria-label="Move label"><svg><use href="#lmove"/></svg></button>
        <button disabled aria-label="Rotate label"><svg><use href="#lrot"/></svg></button>
        <button disabled aria-label="Change label"><svg><use href="#ledit"/></svg></button>
      </div>
      <div class="group g-one"><button aria-label="MetaSearch"><svg><use href="#metasearch"/></svg></button></div>
      <div class="group g-one"><button aria-label="Python console"><svg><use href="#python"/></svg></button></div>
      <div class="group g-one"><button aria-label="Help contents"><svg><use href="#help"/></svg></button></div>
      <div class="group"></div>
    </div>

    <main class="work">
      <aside class="docks">
        <section class="dock browser">
          <div class="dock-title"><h2>Browser</h2><button aria-label="Float"><svg><use href="#d-float"/></svg></button><button aria-label="Close"><svg><use href="#d-close"/></svg></button></div>
          <div class="dock-tools">
            <button aria-label="Add"><svg><use href="#d-add"/></svg></button>
            <button aria-label="Refresh"><svg><use href="#refresh"/></svg></button>
            <button aria-label="Filter"><svg><use href="#d-filter"/></svg></button>
            <button aria-label="Collapse all"><svg><use href="#d-collapse"/></svg></button>
            <button aria-label="Properties"><svg><use href="#d-info"/></svg></button>
          </div>
          <ul class="tree">
            <li><svg><use href="#t-star"/></svg>Favorites</li>
            <li class="more"><svg><use href="#t-bm"/></svg>Spatial Bookmarks</li>
            <li class="more"><svg><use href="#t-home"/></svg>Home</li>
            <li class="more"><svg><use href="#t-dir"/></svg>C:\ (OS)</li>
            <li><svg><use href="#t-gpkg"/></svg>GeoPackage</li>
            <li><svg><use href="#feather"/></svg>SpatiaLite</li>
            <li><svg><use href="#t-pg"/></svg>PostgreSQL</li>
            <li><svg><use href="#t-hana"/></svg>SAP HANA</li>
            <li><svg><use href="#t-stac"/></svg>STAC</li>
            <li><svg><use href="#t-ms"/></svg>MS SQL Server</li>
            <li><svg><use href="#t-ora"/></svg>Oracle</li>
            <li><svg><use href="#t-globe"/></svg>WMS/WMTS</li>
            <li><svg><use href="#t-cloud"/></svg>Cloud</li>
            <li><svg><use href="#t-scene"/></svg>Scenes</li>
            <li><svg><use href="#t-sens"/></svg>SensorThings</li>
            <li><svg><use href="#t-grid"/></svg>Vector Tiles</li>
            <li class="more"><svg><use href="#t-xyz"/></svg>XYZ Tiles</li>
            <li><svg><use href="#t-wcs"/></svg>WCS</li>
            <li><svg><use href="#t-wfs"/></svg>WFS / OGC API - Features</li>
            <li><svg><use href="#t-arc"/></svg>ArcGIS REST Servers</li>
          </ul>
        </section>
        <div class="splitter"></div>
        <section class="dock layers">
          <div class="dock-title"><h2>Layers</h2><button aria-label="Float"><svg><use href="#d-float"/></svg></button><button aria-label="Close"><svg><use href="#d-close"/></svg></button></div>
          <div class="dock-tools">
            <button aria-label="Layer styling"><svg><use href="#d-style"/></svg></button>
            <button aria-label="Add group"><svg><use href="#d-group"/></svg></button>
            <button class="wide tick" aria-label="Map themes"><svg><use href="#d-eye"/></svg></button>
            <button class="wide tick" aria-label="Filter legend"><svg><use href="#d-filter"/></svg></button>
            <button class="eps" aria-label="Filter by expression"><svg><use href="#d-eps"/></svg></button>
            <button aria-label="Expand all"><svg><use href="#d-expand"/></svg></button>
            <button aria-label="Collapse all"><svg><use href="#d-collapse"/></svg></button>
            <button aria-label="Remove layer"><svg><use href="#d-remove"/></svg></button>
          </div>
          <ul class="tree legend">
            <li><label><input type="checkbox" checked><i class="ln c-violet"></i><span>Polygon Buffer Feature_Lines</span></label></li>
            <li><label><input type="checkbox" checked><i class="ln c-amber"></i><span>Polygon Buffer Feature_Lines</span></label></li>
            <li><label><input type="checkbox" checked><i class="ln c-sand"></i><span>Polygon Buffer Feature_Lines</span></label></li>
            <li><label><input type="checkbox" checked><i class="sw c-purple"></i><span>Polygon Buffer Feature_StandPerimeter</span></label></li>
            <li><label><input type="checkbox" checked><i class="sw c-pink"></i><span>Polygon Buffer Feature_StandPerimeter</span></label></li>
            <li><label><input type="checkbox" checked><i class="sw c-red"></i><span>Polygon Buffer Feature_StandPerimeter</span></label></li>
            <li><label><input type="checkbox" checked><i class="sw c-brown"></i><span>Polygon Buffer Feature_SprayArea</span></label></li>
            <li><label><input type="checkbox" checked><i class="sw c-green"></i><span>Polygon Buffer Feature_SprayArea</span></label></li>
            <li><label><input type="checkbox" checked><i class="sw c-gold"></i><span>Polygon Buffer Feature_SprayArea</span></label></li>
            <li><label><input type="checkbox" checked><i class="sw c-rose"></i><span>Polygon Buffer Feature_NoSparayArea</span></label></li>
            <li><label><input type="checkbox" checked><i class="sw c-coral"></i><span>Polygon Buffer Feature_NoSparayArea</span></label></li>
            <li class="current"><label><input type="checkbox" checked><i class="sw c-wine"></i><span>Polygon Buffer Feature_NoSparayArea</span></label></li>
          </ul>
        </section>
      </aside>

      <div class="canvas">
        <div class="message">
          <svg class="bubble" viewBox="0 0 18 16"><path d="M3 .7h12c2.500 0 2.500 1 2.500 2v6c0 2-1 2.300-2.500 2.300H9.500L5 15.300V11H3C1 11 .7 10 .7 8.700v-6C.7 1.500 1 .7 3 .7z" fill="#fff" stroke="#858b90" stroke-width="1"/></svg>
          <p>Installed font Open Sans</p>
          <button class="license">View License</button>
          <button class="dismiss" aria-label="Dismiss"><svg viewBox="0 0 14 14"><circle cx="7" cy="7" r="7" fill="#2b2e30"/><path d="M4.200 4.200l5.600 5.600M9.800 4.200L4.200 9.800" stroke="#fff" stroke-width="2.300"/></svg></button>
        </div>
        <svg class="map" viewBox="0 0 1349 810" preserveAspectRatio="xMinYMin meet">
          <g transform="translate(289 279) scale(.33333)" fill="none" stroke-linejoin="round">
            <path d="M41 249L180 206 275 176 318 158 750 68 818 47 990 41 1063 185 1152 665 825 714 545 775 487 788 403 826 345 826 200 936 150 963 138 948 65 685 57 400 55 295z" fill="#997cb6" stroke="#111" stroke-width="3.500"/>
            <path d="M1018 38L850 45C800 46 790 60 720 86 690 94 670 90 610 99 520 116 400 153 320 160 290 164 250 190 160 215L41 249 54 295C52 400 58 520 55 610 60 650 62 680 66 700 75 770 95 800 107 830L138 948 150 963 200 936 345 826 403 826 487 788C560 775 590 779 630 769 700 760 760 735 825 714L1152 665C1128 640 1130 560 1116 480L1063 190" stroke="#a58a86" stroke-width="2.500"/>
          </g>
        </svg>
      </div>
    </main>

    <footer class="status">
      <div class="locator"><svg viewBox="0 0 12 12"><circle cx="4.800" cy="4.800" r="3.800" fill="none" stroke="#888"/><path d="M7.500 7.500L11 11" stroke="#888" stroke-width="1.300"/></svg><input type="text" aria-label="Locator" placeholder="Type to locate (Ctrl+K)"></div>
      <label for="coord">Coordinate</label>
      <input id="coord" class="coord" type="text" value="272716.8, 3801503.0">
      <button class="mouse" aria-label="Toggle extents"><svg viewBox="0 0 14 14"><path d="M1 4c0-2 3-4 5-2l6 6c2 2-1 5-4 4.500z" fill="#444"/><path d="M3 5.500l3-2.500M5 7.500L8 5M7 9.500L10 7" stroke="#eee" stroke-width="1.200"/><path d="M9 3l4-2.500" stroke="#555" stroke-width="1.300"/><path d="M1 9.500l5 3.500" stroke="#777"/></svg></button>
      <label for="scale">Scale</label>
      <select id="scale" class="scale"><option>1:416</option></select>
      <button class="lock" aria-label="Lock scale"><svg viewBox="0 0 12 14"><path d="M3 7V4.500a3 3 0 016 0V7" fill="none" stroke="#777" stroke-width="1.600"/><rect x="1" y="6.500" width="10" height="6.500" rx="1" fill="#555"/></svg></button>
      <label for="magn">Magnifier</label>
      <div class="spin"><input id="magn" type="text" value="100%"><button aria-label="Step"></button></div>
      <label for="rot">Rotation</label>
      <div class="spin rot"><input id="rot" type="text" value="0.0 °"><button aria-label="Step"></button></div>
      <label class="render"><input type="checkbox" checked>Render</label>
      <button class="crs"><svg viewBox="0 0 12 12"><circle cx="6" cy="6" r="5.500" fill="#777"/><path d="M.5 6h11M1.500 3.500h9M1.500 8.500h9M6 .5v11M3.500 1.500c-1.500 3-1.500 6 0 9M8.500 1.500c1.500 3 1.500 6 0 9" fill="none" stroke="#ccc" stroke-width=".5"/></svg>EPSG:26917</button>
      <button class="log" aria-label="Messages"><svg viewBox="0 0 14 12"><path d="M7 .5c8 0 8 9 1.500 9.200L10 11.800 5 9.600C-1.500 9 -1 .5 7 .5z" fill="#555"/><path d="M3.500 5h1.500M6.300 5h1.500M9 5h1.500" stroke="#fff" stroke-width="1.500"/></svg></button>
    </footer>
  </body>
</html>
```
FILE: styles.css
```css
* {
  box-sizing: border-box;
}
body {
  margin: 0;
  height: 100vh;
  display: flex;
  flex-direction: column;
  background-color: #efefef;
  color: #1e1e1e;
  font: 10px "Lato", sans-serif;
  border-bottom: 1px solid #5d7480;
  overflow: hidden;
}
button,
input,
select {
  font: inherit;
  color: inherit;
  margin: 0;
  padding: 0;
}
button {
  background: none;
  border: 0;
  display: flex;
  align-items: center;
  justify-content: center;
}
svg {
  display: block;
  flex: none;
}
.defs {
  position: absolute;
}
h1,
h2,
p,
ul {
  margin: 0;
  padding: 0;
  font-size: inherit;
  font-weight: normal;
}

/* title bar and menus */
.titlebar {
  height: 19px;
  flex: none;
  display: flex;
  align-items: center;
  gap: 5px;
  padding-left: 2px;
  background-color: #2d7d9b;
  border-bottom: 1px solid #0f6b8e;
  color: #fff;
}
.logo {
  width: 13px;
  height: 13px;
}
.winbtns {
  display: flex;
  margin-left: auto;
}
.winbtns button {
  width: 38px;
  height: 18px;
}
.winbtns svg {
  width: 10px;
  height: 10px;
}
.menubar {
  height: 17px;
  flex: none;
  display: flex;
  align-items: center;
  gap: 1px;
  padding-left: 3px;
  border-bottom: 1px solid #d4d4d4;
}
.menubar a {
  padding: 0 5px;
  color: #1e1e1e;
  text-decoration: none;
}

/* toolbars */
.toolbar {
  height: 32px;
  flex: none;
  display: flex;
  align-items: center;
  gap: 7px;
  padding-left: 3px;
  background: linear-gradient(#fafafa, #ededed);
  border-bottom: 1px solid #c9c9c9;
}
.toolbar.second {
  height: 33px;
  border-bottom-color: #b4b4b4;
}
.group {
  display: flex;
  align-items: center;
}
.group::before {
  content: "";
  flex: none;
  width: 5px;
  height: 15px;
  margin-right: 2px;
  background: radial-gradient(circle at 1px 1px, #d0d0d0 1px, transparent 1px) 0 0 / 3px 3px;
}
.group button {
  flex: 11 1 0;
  height: 25px;
  border: 1px solid transparent;
  border-radius: 3px;
}
.group svg {
  width: 20px;
  height: 20px;
}
.group button.on {
  background-color: #dcdcdc;
  border-color: #b0b0b0;
}
.group button.drop {
  flex-grow: 15;
  gap: 5px;
}
.drop::after,
.eps::after {
  content: "";
  border: 3px solid transparent;
  border-top-color: #555;
  border-bottom: 0;
}
.drop:disabled::after {
  border-top-color: #999;
}
button:disabled svg {
  opacity: 0.35;
  filter: grayscale(1);
}
.tick {
  position: relative;
}
.tick::after {
  content: "";
  position: absolute;
  right: 2px;
  bottom: 0;
  border: 2px solid transparent;
  border-top-color: #555;
  border-bottom: 0;
}
.sep {
  width: 1px;
  height: 17px;
  margin: 0 3px;
  background-color: #ccc;
}
.g-file {
  width: 172px;
}
.g-nav {
  width: 447px;
}
.g-select {
  width: 156px;
}
.g-attr {
  width: 257px;
}
.g-source {
  width: 199px;
}
.g-edit {
  width: 384px;
}
.g-label {
  width: 267px;
}
.g-one {
  width: 33px;
}

/* left panels */
.work {
  flex: 1;
  min-height: 0;
  display: flex;
}
.docks {
  width: 250px;
  flex: none;
  padding-right: 5px;
  display: flex;
  flex-direction: column;
}
.dock {
  display: flex;
  flex-direction: column;
  min-height: 0;
}
.browser {
  flex: 387 1 0;
}
.layers {
  flex: 444 1 0;
}
.splitter {
  flex: none;
  width: 15px;
  height: 5px;
  padding: 1px 0;
  align-self: center;
  background: radial-gradient(circle at 1px 1px, #bbb 1px, transparent 1px) 0 0 / 3px 3px repeat-x content-box;
}
.dock-title {
  display: flex;
  align-items: center;
  gap: 1px;
  height: 14px;
  flex: none;
  padding: 0 1px 0 3px;
}
.dock-title h2 {
  flex: 1;
}
.dock-title svg {
  width: 10px;
  height: 10px;
}
.dock-tools {
  display: flex;
  align-items: center;
  height: 27px;
  flex: none;
  padding-left: 2px;
}
.layers .dock-tools {
  height: 34px;
}
.dock-tools button {
  width: 21px;
  height: 22px;
}
.dock-tools .wide {
  width: 27px;
}
.dock-tools .eps {
  width: 34px;
  gap: 7px;
  margin-left: 4px;
}
.dock-tools svg {
  width: 14px;
  height: 14px;
}
.tree {
  flex: 1;
  min-height: 0;
  list-style: none;
  background-color: #fff;
  border: 1px solid #b9b9b9;
  overflow: hidden;
}
.tree li {
  height: 15px;
  display: flex;
  align-items: center;
  gap: 5px;
  padding-left: 15px;
  white-space: nowrap;
}
.tree li svg {
  width: 14px;
  height: 14px;
}
.tree .more {
  padding-left: 5px;
}
.tree .more::before {
  content: "";
  border: 3px solid transparent;
  border-left: 3px solid #333;
  border-right: 0;
  margin-right: 2px;
}
.legend {
  font: bold 9px "DejaVu Sans Condensed", "DejaVu Sans", sans-serif;
  color: #111;
}
.legend li {
  padding-left: 19px;
}
.legend label {
  display: flex;
  align-items: center;
}
.legend .current {
  background-color: #efefef;
}
.current span {
  text-decoration: underline;
}
input[type="checkbox"] {
  appearance: none;
  width: 12px;
  height: 12px;
  flex: none;
  background: #fff;
  border: 1px solid #ccc;
  display: flex;
  align-items: flex-start;
  justify-content: center;
}
input[type="checkbox"]:checked::before {
  content: "";
  width: 5px;
  height: 8px;
  border: solid #000;
  border-width: 0 2px 2px 0;
  transform: rotate(38deg);
}
.ln {
  width: 12px;
  height: 2px;
  margin: 0 5px 0 5px;
}
.sw {
  width: 13px;
  height: 13px;
  margin: 0 5px 0 5px;
  border: 1px solid #333;
}
.c-violet { background-color: #a88fce; }
.c-amber { background-color: #e9b949; }
.c-sand { background-color: #c9bda5; }
.c-purple { background-color: #997cb6; }
.c-pink { background-color: #e15989; }
.c-red { background-color: #c43c39; }
.c-brown { background-color: #91522d; }
.c-green { background-color: #85b66f; }
.c-gold { background-color: #d5b43c; }
.c-rose { background-color: #f3a6b2; }
.c-coral { background-color: #e77190; }
.c-wine { background-color: #b9484b; }

/* map canvas */
.canvas {
  flex: 1;
  min-width: 0;
  display: flex;
  flex-direction: column;
  background-color: #fff;
  border: solid #b9b9b9;
  border-width: 0 0 1px 1px;
}
.message {
  height: 25px;
  flex: none;
  display: flex;
  align-items: center;
  padding: 0 19px 0 9px;
  background-color: #e7f5fe;
  border: solid #bcd3e2;
  border-width: 1px 0;
  color: #2a4f9e;
  font: 9px "DejaVu Sans Condensed", "DejaVu Sans", sans-serif;
}
.bubble {
  width: 18px;
  height: 16px;
  margin-right: 8px;
}
.license {
  margin-left: auto;
  width: 67px;
  height: 18px;
  color: #222;
  background: linear-gradient(#fff, #f1f1f1);
  border: 1px solid #b4b4b4;
  border-radius: 2px;
}
.dismiss {
  margin-left: 21px;
}
.dismiss svg {
  width: 14px;
  height: 14px;
}
.map {
  flex: 1;
  min-height: 0;
  width: 100%;
}

/* status bar */
.status {
  height: 23px;
  flex: none;
  display: flex;
  align-items: center;
  padding: 0 5px 0 3px;
  font: 9px "DejaVu Sans Condensed", "DejaVu Sans", sans-serif;
}
.status > label {
  margin-right: 3px;
}
.status input[type="text"],
.scale {
  height: 18px;
  border: 1px solid #b9b9b9;
  border-radius: 2px;
  background-color: #fff;
  padding: 0 5px;
}
.locator {
  width: 167px;
  height: 19px;
  display: flex;
  align-items: center;
  gap: 5px;
  padding-left: 7px;
  margin-right: auto;
  background-color: #fff;
  border: 1px solid #b4b4b4;
  border-radius: 3px;
}
.locator svg {
  width: 11px;
  height: 11px;
}
.locator input[type="text"] {
  border: 0;
  padding: 0;
  height: 16px;
  width: 130px;
}
.locator input::placeholder {
  color: #777;
}
.coord {
  width: 100px;
}
.mouse {
  margin: 0 9px 0 3px;
}
.mouse svg {
  width: 14px;
  height: 14px;
}
.scale {
  appearance: none;
  width: 67px;
  padding: 0 4px;
  background: linear-gradient(#555, #555) 55px 7px / 6px 1px no-repeat,
    linear-gradient(#555, #555) 56px 8px / 4px 1px no-repeat,
    linear-gradient(#555, #555) 57px 9px / 2px 1px no-repeat,
    linear-gradient(#c4c4c4, #c4c4c4) 50px 0 / 1px 18px no-repeat, #fff;
}
.lock {
  margin: 0 6px 0 9px;
}
.lock svg {
  width: 12px;
  height: 14px;
}
.spin {
  display: flex;
  width: 70px;
  margin-right: 6px;
}
.status .spin input {
  flex: 1;
  min-width: 0;
  border-radius: 2px 0 0 2px;
  padding: 0 4px;
}
.spin button {
  width: 12px;
  height: 18px;
  flex-direction: column;
  gap: 3px;
  background-color: #f8f8f8;
  border: 1px solid #b9b9b9;
  border-left: 0;
  border-radius: 0 2px 2px 0;
}
.spin button::before,
.spin button::after {
  content: "";
  border: 3px solid transparent;
}
.spin button::before {
  border-top: 0;
  border-bottom: 4px solid #444;
}
.spin button::after {
  border-bottom: 0;
  border-top: 4px solid #444;
}
.rot {
  margin-left: 5px;
  margin-right: 5px;
}
.render {
  display: flex;
  align-items: center;
  gap: 4px;
}
.crs {
  margin: 0 18px 0 12px;
  gap: 1px;
}
.crs svg {
  width: 12px;
  height: 12px;
}
.log svg {
  width: 14px;
  height: 12px;
}
```
